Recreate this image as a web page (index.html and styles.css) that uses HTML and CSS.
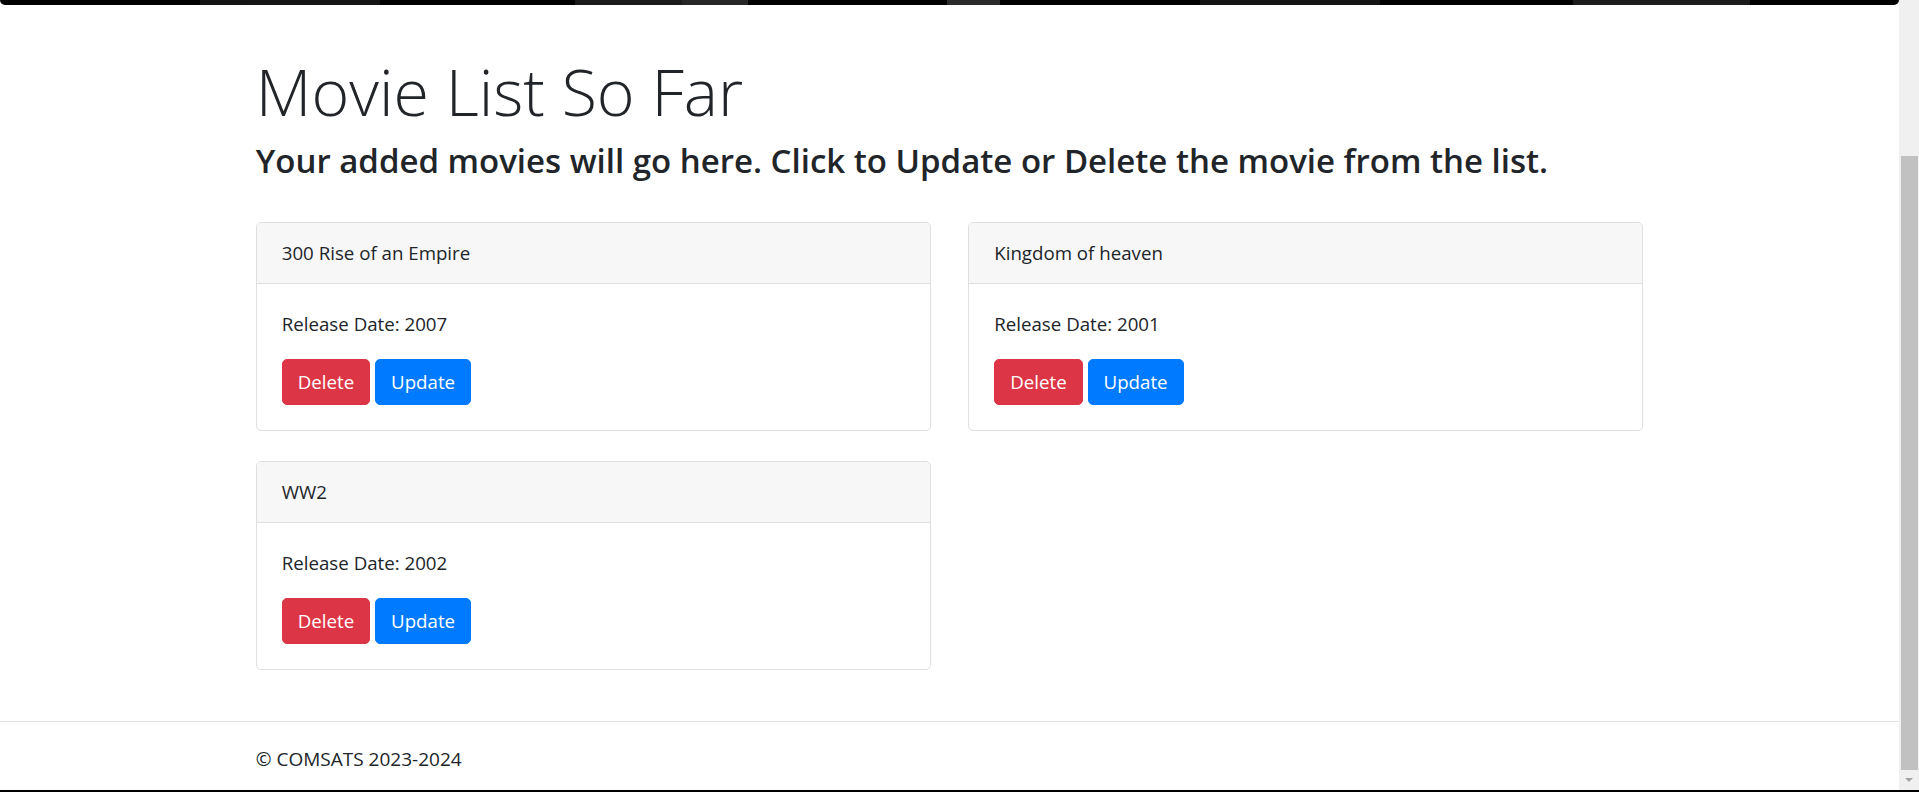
FILE: index.html
```html
<!DOCTYPE html>
<html lang="en">
<head>
<meta charset="utf-8">
<title>Movie List So Far</title>
<link rel="stylesheet" href="styles.css">
</head>
<body>
<div class="frame">
  <div class="page">
    <div class="topbar"></div>
    <main class="container">
      <h1 class="display">Movie List So Far</h1>
      <h3 class="subhead">Your added movies will go here. Click to Update or Delete the movie from the list.</h3>
      <div class="grid">
        <div class="card">
          <div class="card-header">300 Rise of an Empire</div>
          <div class="card-body">
            <p class="card-text">Release Date: 2007</p>
            <button class="btn btn-danger">Delete</button>
            <button class="btn btn-primary">Update</button>
          </div>
        </div>
        <div class="card">
          <div class="card-header">Kingdom of heaven</div>
          <div class="card-body">
            <p class="card-text">Release Date: 2001</p>
            <button class="btn btn-danger">Delete</button>
            <button class="btn btn-primary">Update</button>
          </div>
        </div>
        <div class="card">
          <div class="card-header">WW2</div>
          <div class="card-body">
            <p class="card-text">Release Date: 2002</p>
            <button class="btn btn-danger">Delete</button>
            <button class="btn btn-primary">Update</button>
          </div>
        </div>
      </div>
    </main>
    <footer class="footer">
      <div class="container">&copy; COMSATS 2023-2024</div>
    </footer>
  </div>
  <div class="scrollbar">
    <div class="thumb"></div>
    <div class="arrow-box"><div class="arrow-down"></div></div>
  </div>
</div>
<div class="bottom-edge"></div>
</body>
</html>
```
FILE: styles.css
```css
html, body {
  margin: 0;
  padding: 0;
}
body {
  height: 792px;
  overflow: hidden;
  display: flex;
  flex-direction: column;
  background: #fff;
  color: #212529;
  font-family: "Open Sans", "Noto Sans", "Liberation Sans", sans-serif;
  font-size: 18.7px;
  line-height: 30px;
}
.frame {
  flex: 1;
  display: flex;
  min-height: 0;
}
.page {
  flex: 1;
  display: flex;
  flex-direction: column;
  overflow: hidden;
  min-width: 0;
}
.topbar {
  height: 5px;
  flex: none;
  border-radius: 0 0 5px 5px;
  background: linear-gradient(to right,
    #000 0, #000 200px,
    #141414 200px, #151515 380px,
    #000 380px, #000 575px,
    #1b1b1b 575px, #1b1b1b 682px,
    #262626 682px, #262626 748px,
    #000 748px, #000 947px,
    #2a2a2a 947px, #2a2a2a 1000px,
    #000 1000px, #000 1200px,
    #141414 1200px, #141414 1380px,
    #000 1380px, #000 1573px,
    #1c1c1c 1573px, #1c1c1c 1750px,
    #000 1750px, #000 100%);
}
.container {
  width: 1387.5px;
  margin: 0 auto;
  box-sizing: border-box;
}
main.container {
  flex: none;
  margin-bottom: 51px;
}
.display {
  margin: 44px 0 7px;
  font-size: 64.5px;
  font-weight: 300;
  line-height: 84px;
}
.subhead {
  margin: 0 0 40px;
  font-size: 33px;
  font-weight: 600;
  line-height: 42px;
}
.grid {
  display: grid;
  grid-template-columns: 675px 675px;
  column-gap: 37.5px;
  row-gap: 30px;
}
.card {
  border: 1px solid #dfdfdf;
  border-radius: 5px;
  background: #fff;
  overflow: hidden;
}
.card-header {
  padding: 15px 25px;
  background: #f7f7f7;
  border-bottom: 1px solid #dfdfdf;
}
.card-body {
  padding: 25px;
}
.card-text {
  margin: 0 0 20px;
}
.btn {
  font-family: inherit;
  font-size: 18.7px;
  line-height: 30px;
  padding: 7px 15px;
  border: 1px solid transparent;
  border-radius: 5px;
  color: #fff;
  cursor: pointer;
  vertical-align: middle;
}
.btn-danger {
  background: #dc3545;
  border-color: #dc3545;
}
.btn-primary {
  background: #007bff;
  border-color: #007bff;
}
.footer {
  flex: none;
  border-top: 1px solid #e5e5e5;
  line-height: 75px;
  font-size: 19px;
  white-space: nowrap;
}
.scrollbar {
  width: 20px;
  flex: none;
  background: #f0f0f0;
  display: flex;
  flex-direction: column;
  padding-top: 156px;
  box-sizing: border-box;
}
.thumb {
  height: 614px;
  margin: 0 1px 0 2px;
  background: #c1c1c1;
}
.arrow-box {
  flex: 1;
  display: flex;
  align-items: center;
  justify-content: center;
}
.arrow-down {
  width: 0;
  height: 0;
  border-left: 4px solid transparent;
  border-right: 4px solid transparent;
  border-top: 4px solid #a3a3a3;
}
.bottom-edge {
  height: 2px;
  flex: none;
  background: #000;
}
```
